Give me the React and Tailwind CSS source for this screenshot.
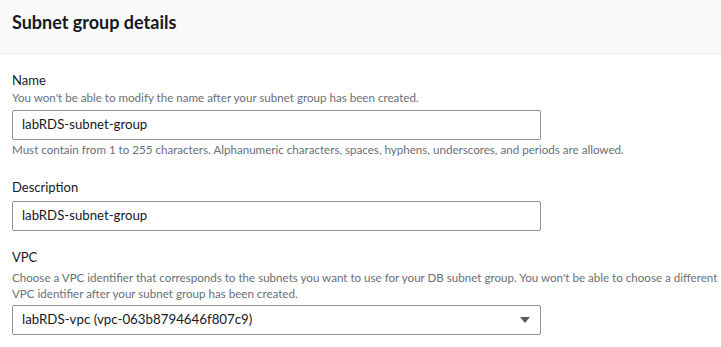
import React from "react";

function Field({ label, help, helpClass = "", children, footer, className = "" }) {
  return (
    <div className={className}>
      <div className="text-[13px] leading-5 text-[#16191f]">{label}</div>
      {help && (
        <div className={"text-[11.6px] leading-4 text-[#687078] " + helpClass}>{help}</div>
      )}
      {children}
      {footer && (
        <div className="text-[11.6px] leading-4 text-[#687078] mt-0.5">{footer}</div>
      )}
    </div>
  );
}

export default function App() {
  return (
    <div
      className="w-[721px] h-[347px] bg-white overflow-hidden"
      style={{ fontFamily: 'Lato, "Open Sans", sans-serif' }}
    >
      <div className="h-[54px] bg-[#fafafa] border-b border-[#eaeded] px-3 pt-[11px]">
        <h2 className="text-[18px] leading-[22px] font-bold text-[#16191f]">
          Subnet group details
        </h2>
      </div>

      <div className="px-3 pt-4">
        <Field
          label="Name"
          help="You won't be able to modify the name after your subnet group has been created."
          footer="Must contain from 1 to 255 characters. Alphanumeric characters, spaces, hyphens, underscores, and periods are allowed."
        >
          <div className="mt-1 w-[529px] h-[30px] border border-[#879596] rounded-[2px] px-[9px] flex items-center text-[13.2px] text-[#16191f]">
            labRDS-subnet-group
          </div>
        </Field>

        <Field label="Description" className="mt-[19px]">
          <div className="mt-1 w-[529px] h-[30px] border border-[#879596] rounded-[2px] px-[9px] flex items-center text-[13.2px] text-[#16191f]">
            labRDS-subnet-group
          </div>
        </Field>

        <Field
          label="VPC"
          className="mt-4"
          helpClass="mt-[3px]"
          help={
            <span className="block whitespace-nowrap">
              Choose a VPC identifier that corresponds to the subnets you want to use for your DB subnet group. You won't be able to choose a different
              <br />
              VPC identifier after your subnet group has been created.
            </span>
          }
        >
          <div className="mt-[3px] w-[529px] h-[30px] border border-[#879596] rounded-[2px] pl-[9px] pr-[10px] flex items-center justify-between text-[13.3px] text-[#16191f]">
            <span>labRDS-vpc (vpc-063b8794646f807c9)</span>
            <svg width="10" height="6" viewBox="0 0 10 6">
              <polygon points="0,0 10,0 5,6" fill="#545b64" />
            </svg>
          </div>
        </Field>
      </div>
    </div>
  );
}
